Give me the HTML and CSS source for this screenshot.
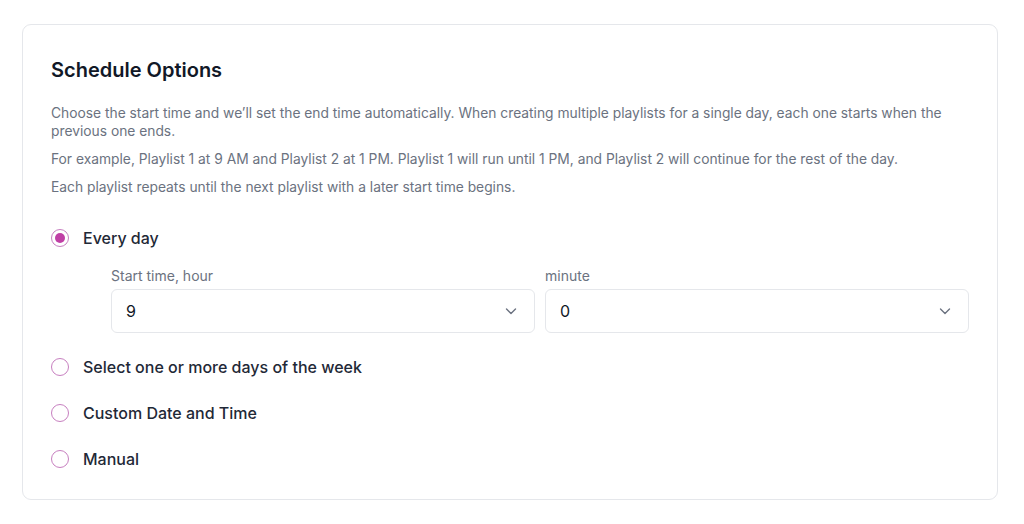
FILE: index.html
```html
<!DOCTYPE html>
<html lang="en">
<head>
<meta charset="UTF-8">
<title>Schedule Options</title>
<link rel="stylesheet" href="styles.css">
</head>
<body>
<section class="card">
    <h2 class="card-title">Schedule Options</h2>
    <div class="intro">
        <p>Choose the start time and we’ll set the end time automatically. When creating multiple playlists for a single day, each one starts when the previous one ends.</p>
        <p>For example, Playlist 1 at 9 AM and Playlist 2 at 1 PM. Playlist 1 will run until 1 PM, and Playlist 2 will continue for the rest of the day.</p>
        <p>Each playlist repeats until the next playlist with a later start time begins.</p>
    </div>

    <div class="options">
        <label class="option">
            <input type="radio" name="schedule" value="daily" checked>
            <span>Every day</span>
        </label>
        <div class="time-row">
            <div class="field">
                <label for="hour">Start time, hour</label>
                <div class="select-wrap">
                    <select id="hour">
                        <option>9</option>
                    </select>
                    <svg class="chevron" width="14" height="14" viewBox="0 0 14 14"><path d="M2.5 5l4.5 4.5L11.5 5" fill="none" stroke="#6b7280" stroke-width="1.4" stroke-linecap="round" stroke-linejoin="round"/></svg>
                </div>
            </div>
            <div class="field">
                <label for="minute">minute</label>
                <div class="select-wrap">
                    <select id="minute">
                        <option>0</option>
                    </select>
                    <svg class="chevron" width="14" height="14" viewBox="0 0 14 14"><path d="M2.5 5l4.5 4.5L11.5 5" fill="none" stroke="#6b7280" stroke-width="1.4" stroke-linecap="round" stroke-linejoin="round"/></svg>
                </div>
            </div>
        </div>
        <label class="option">
            <input type="radio" name="schedule" value="weekdays">
            <span>Select one or more days of the week</span>
        </label>
        <label class="option">
            <input type="radio" name="schedule" value="custom">
            <span>Custom Date and Time</span>
        </label>
        <label class="option">
            <input type="radio" name="schedule" value="manual">
            <span>Manual</span>
        </label>
    </div>
</section>
</body>
</html>
```

FILE: styles.css
```css
body {
    margin: 0;
    background: #fff;
    font-family: 'Inter', 'Liberation Sans', sans-serif;
    color: #111827;
}
.card {
    margin: 24px 0 0 22px;
    width: 976px;
    height: 476px;
    box-sizing: border-box;
    border: 1px solid #e5e7eb;
    border-radius: 9px;
    padding: 32px 28px 0 28px;
}
.card-title {
    margin: 0;
    font-size: 20px;
    line-height: 26px;
    font-weight: 600;
    color: #111827;
}
.intro {
    margin-top: 21px;
}
.intro p {
    margin: 0 0 10px 0;
    font-size: 13.8px;
    line-height: 18px;
    color: #6b7280;
}
.options {
    margin-top: 30px;
}
.option {
    display: flex;
    align-items: center;
    gap: 14px;
    height: 24px;
    font-size: 16px;
    font-weight: 500;
    color: #1f2937;
    cursor: pointer;
    margin-bottom: 22px;
}
.option input {
    appearance: none;
    width: 18px;
    height: 18px;
    margin: 0;
    border: 1.5px solid #c77fc0;
    border-radius: 50%;
    background: #fff;
    display: grid;
    place-items: center;
}
.option input:checked::after {
    content: "";
    width: 10px;
    height: 10px;
    border-radius: 50%;
    background: #c03fa6;
}
.time-row {
    display: flex;
    gap: 10px;
    padding-left: 60px;
    margin-top: -5px;
    margin-bottom: 22px;
}
.field {
    flex: 1;
}
.field label {
    display: block;
    font-size: 14px;
    line-height: 18px;
    color: #6b7280;
    margin-bottom: 4px;
}
.select-wrap {
    position: relative;
}
.select-wrap select {
    appearance: none;
    width: 100%;
    height: 44px;
    border: 1px solid #e5e7eb;
    border-radius: 6px;
    background: #fff;
    padding: 0 14px;
    font-family: inherit;
    font-size: 16px;
    color: #111827;
}
.chevron {
    position: absolute;
    right: 17px;
    top: 15px;
    pointer-events: none;
}
```
